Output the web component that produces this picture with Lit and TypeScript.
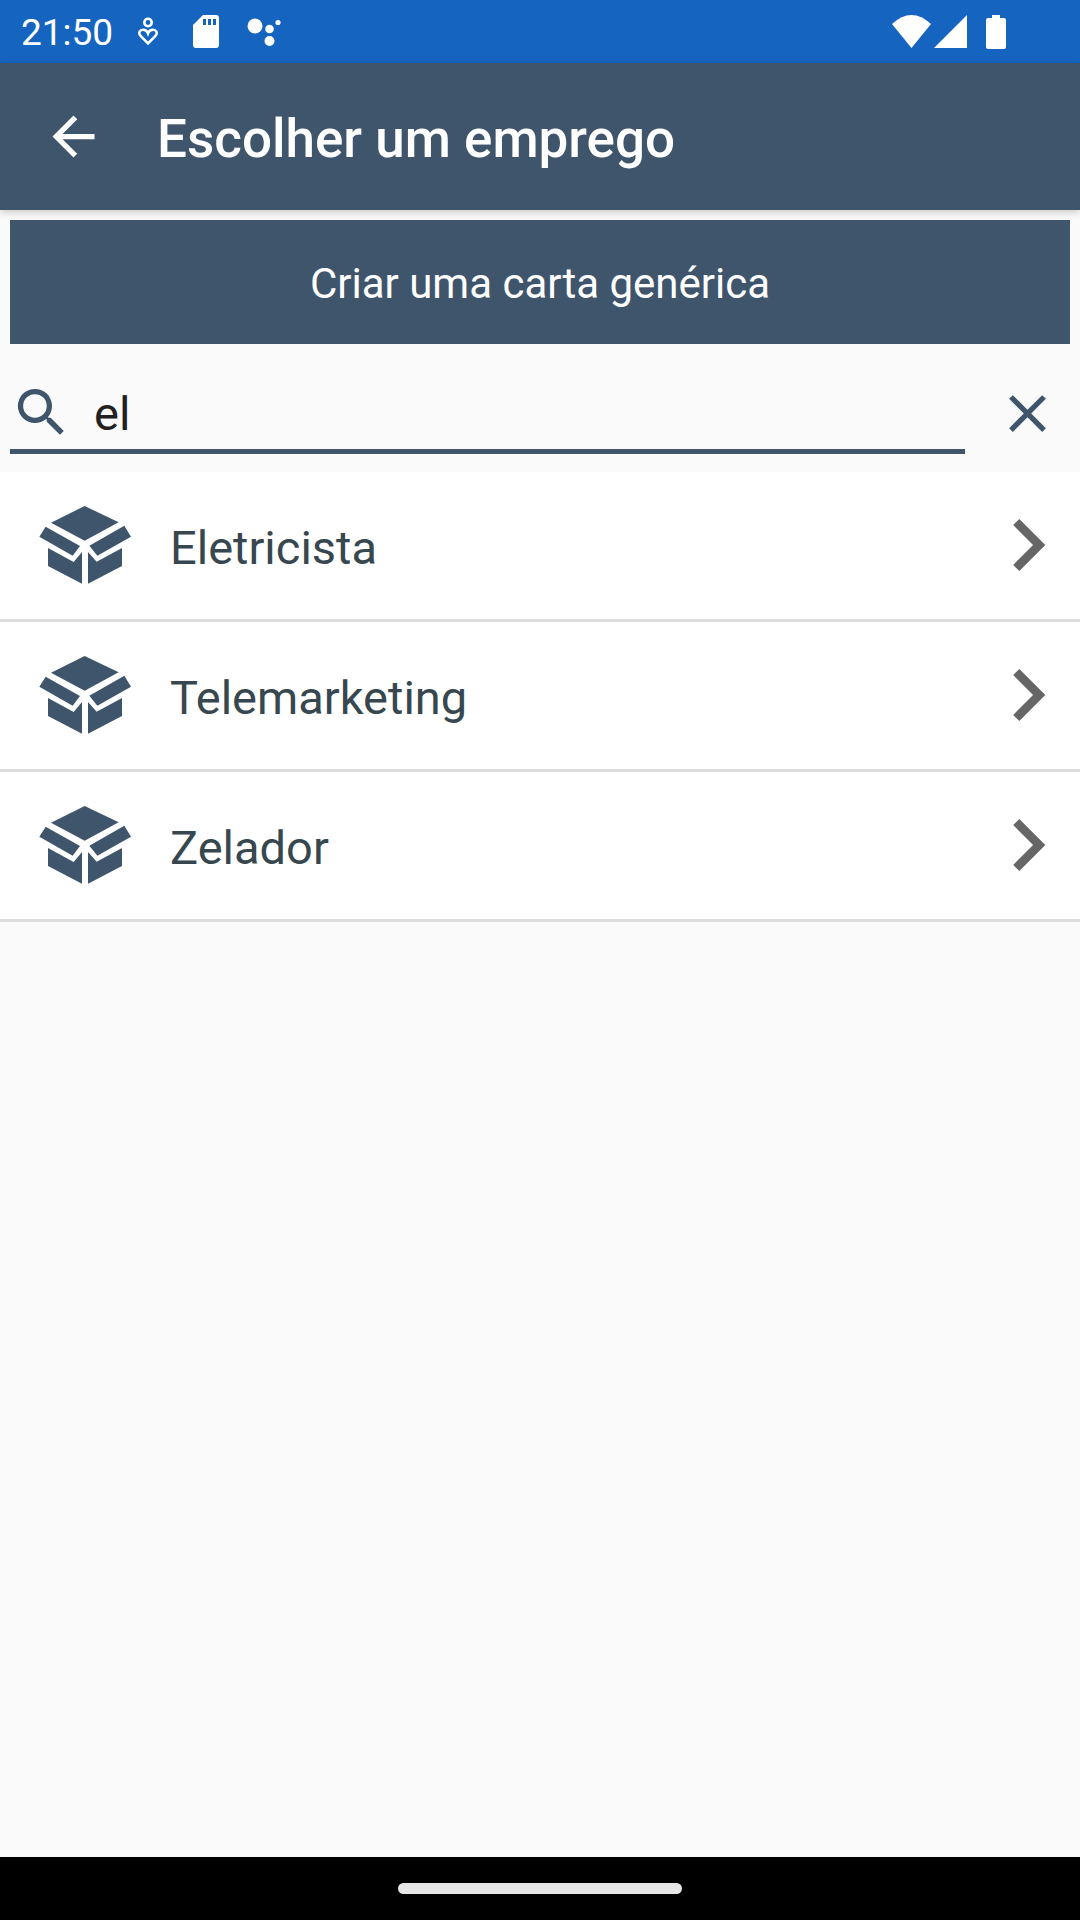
import { LitElement, html, svg, css } from "lit";
import { customElement, state } from "lit/decorators.js";

const jobs = ["Eletricista", "Telemarketing", "Zelador"];

const boxIcon = html`<svg class="box" viewBox="117 138 276 234" aria-hidden="true">
  ${svg`<path d="M254 138 356 187 254 242 153 188Z"/>
  <path d="M137 200 240 258 218 287 118 230Z"/>
  <path d="M373 197 268 257 292 287 393 230Z"/>
  <path d="M144 264 221 306 246 276V371L144 318Z"/>
  <path d="M366 264 290 305 264 276V371L366 318Z"/>`}
</svg>`;

@customElement("app-root")
export class AppRoot extends LitElement {
  @state() private query = "el";

  static styles = css`
    :host {
      display: flex;
      flex-direction: column;
      min-height: 100vh;
      background: #fafafa;
      font-family: Roboto, "Liberation Sans", sans-serif;
      color: #37474f;
    }
    * { box-sizing: border-box; }
    svg { display: block; flex: none; }
    button, input {
      font: inherit;
      color: inherit;
      background: none;
      border: 0;
      margin: 0;
      padding: 0;
      border-radius: 0;
      outline: none;
    }
    button { cursor: pointer; }
    .status {
      display: flex;
      align-items: center;
      justify-content: space-between;
      height: 63px;
      padding: 0 72px 0 21px;
      background: #1565c0;
      color: #fff;
      font-size: 37px;
    }
    .status svg { fill: currentColor; }
    .status-group { display: flex; align-items: center; }
    .clock { padding-top: 2px; }
    .notifications { margin-left: 24px; }
    .bar {
      display: flex;
      align-items: center;
      gap: 52px;
      height: 147px;
      padding: 0 42px;
      background: #3f556c;
      color: #fff;
      box-shadow: 0 2px 8px rgba(0, 0, 0, 0.2);
    }
    .bar svg { fill: currentColor; }
    .title {
      margin: 0;
      padding-top: 4px;
      font-size: 53px;
      font-weight: 500;
      line-height: 64px;
    }
    .generic {
      height: 124px;
      margin: 10px 10px 0;
      padding-top: 4px;
      background: #3f556c;
      color: #fff;
      font-size: 42px;
      line-height: 48px;
    }
    .search {
      display: flex;
      align-items: center;
      padding: 31px 21px 18px 10px;
      gap: 31px;
    }
    .search svg { fill: #3f556c; }
    .field {
      display: flex;
      flex: 1;
      align-items: center;
      gap: 21px;
      height: 79px;
      border-bottom: 5px solid #3f556c;
    }
    .input {
      flex: 1;
      min-width: 0;
      height: 74px;
      padding-top: 2px;
      color: #212121;
      font-size: 47px;
    }
    .clear { padding-bottom: 2px; }
    .list { margin: 0; padding: 0; list-style: none; background: #fff; }
    .item { border-bottom: 3px solid #dcdcdc; }
    .row {
      display: flex;
      align-items: center;
      width: 100%;
      height: 147px;
      padding: 0 0 2px 39px;
      gap: 39px;
      text-align: left;
      font-size: 47px;
      line-height: 56px;
    }
    .box { width: 92px; height: 78px; fill: #3f556c; }
    .label { flex: 1; padding-top: 6px; }
    .chevron { fill: #666; }
    .nav {
      display: flex;
      align-items: center;
      justify-content: center;
      height: 63px;
      margin-top: auto;
      background: #000;
    }
    .pill { width: 284px; height: 11px; border-radius: 6px; background: #e6e6e6; }
  `;

  render() {
    return html`
      <div class="status">
        <div class="status-group">
          <span class="clock">21:50</span>
          <svg class="notifications" width="145" height="36" viewBox="137 14 145 36" aria-hidden="true">
            <circle cx="148" cy="22.5" r="3.7" fill="none" stroke="currentColor" stroke-width="2.6"/>
            <path d="M148 43.3 141 36.3C137.5 32.8 140 29.8 143 29.8 145.5 29.8 147.2 31.3 148 33.4 148.8 31.3 150.5 29.8 153 29.8 156 29.8 158.5 32.8 155 36.3Z" fill="none" stroke="currentColor" stroke-width="2.6"/>
            <path d="M203 15H216Q219 15 219 18V45Q219 48 216 48H196Q193 48 193 45V25Z"/>
            <path d="M203 19h3v6h-3zM208 19h3v6h-3zM213 19h3v6h-3z" fill="#1565c0"/>
            <circle cx="255" cy="26" r="7.5"/><circle cx="269.5" cy="29" r="4.3"/>
            <circle cx="269.5" cy="41" r="5"/><circle cx="278" cy="22.5" r="2.6"/>
          </svg>
        </div>
        <svg width="116" height="36" viewBox="892 13 116 36" aria-hidden="true">
          <path d="M892 23Q911.5 5 931 23L911.5 47Z"/>
          <path d="M934 47 967 14V47Z"/>
          <path d="M992 14h8v3h4q2 0 2 2v27q0 2-2 2h-16q-2 0-2-2v-27q0-2 2-2h4z"/>
        </svg>
      </div>
      <header class="bar">
        <button aria-label="Voltar">
          <svg width="63" height="63" viewBox="0 0 24 24"><path d="M20 11H7.83l5.59-5.59L12 4l-8 8 8 8 1.41-1.41L7.83 13H20z"/></svg>
        </button>
        <h1 class="title">Escolher um emprego</h1>
      </header>
      <button class="generic">Criar uma carta genérica</button>
      <div class="search">
        <label class="field">
          <svg width="63" height="63" viewBox="0 0 24 24" aria-hidden="true"><path d="M15.5 14h-.79l-.28-.27A6.47 6.47 0 0 0 16 9.5 6.5 6.5 0 1 0 9.5 16c1.61 0 3.09-.59 4.23-1.57l.27.28v.79l5 4.99L20.49 19zm-6 0a4.5 4.5 0 1 1 0-9 4.5 4.5 0 0 1 0 9z"/></svg>
          <input class="input" type="text" aria-label="Buscar" .value=${this.query}
            @input=${(e: Event) => (this.query = (e.target as HTMLInputElement).value)} />
        </label>
        <button class="clear" aria-label="Limpar" @click=${() => (this.query = "")}>
          <svg width="63" height="63" viewBox="0 0 24 24"><path d="M19 6.41 17.59 5 12 10.59 6.41 5 5 6.41 10.59 12 5 17.59 6.41 19 12 13.41 17.59 19 19 17.59 13.41 12z"/></svg>
        </button>
      </div>
      <ul class="list">
        ${jobs
          .filter((job) => job.toLowerCase().includes(this.query.toLowerCase()))
          .map(
            (job) => html`<li class="item">
              <button class="row">
                ${boxIcon}<span class="label">${job}</span>
                <svg class="chevron" width="104" height="104" viewBox="0 0 24 24" aria-hidden="true"><path d="M10 6 8.59 7.41 13.17 12l-4.58 4.59L10 18l6-6z"/></svg>
              </button>
            </li>`
          )}
      </ul>
      <div class="nav"><div class="pill"></div></div>
    `;
  }
}
